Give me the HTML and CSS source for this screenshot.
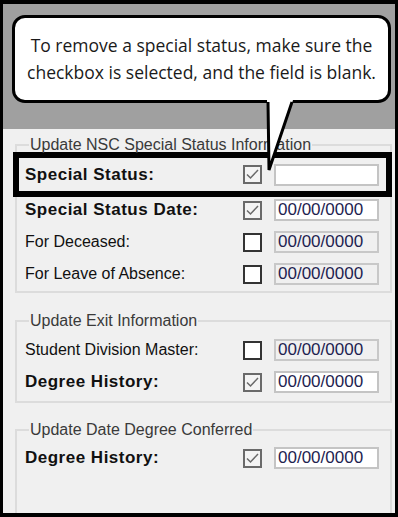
FILE: index.html
```html
<!DOCTYPE html>
<html lang="en">
  <head>
    <meta charset="UTF-8" />
    <meta name="viewport" content="width=device-width, initial-scale=1.0" />
    <title>Update Special Status</title>
    <link rel="stylesheet" href="styles.css">
  </head>
  <body>
    <div class="frame">
      <div class="header">
        <div class="bubble">
          <p class="bubble-text">To remove a special status, make sure the<br />checkbox is selected, and the field is blank.</p>
        </div>
      </div>
      <svg class="bubble-tail" width="36" height="78" viewBox="0 0 36 78">
        <polygon points="5,3 31,3 7,73" fill="#fff" />
        <polyline points="6,5 7,73 30,5" fill="none" stroke="#000" stroke-width="3" stroke-linejoin="miter" />
      </svg>

      <div class="panel">
        <fieldset class="group group-first">
          <legend>Update NSC Special Status Information</legend>
          <div class="row row-highlight">
            <span class="label label-bold">Special Status:</span>
            <span class="box box-checked">
              <svg width="15" height="15" viewBox="0 0 15 15"><polyline points="2,7.5 5.5,11 13,3" fill="none" stroke="#6a6a6a" stroke-width="1.5" /></svg>
            </span>
            <input type="text" class="field" value="" />
          </div>
          <div class="row row-tight">
            <span class="label label-bold">Special Status Date:</span>
            <span class="box box-checked">
              <svg width="15" height="15" viewBox="0 0 15 15"><polyline points="2,7.5 5.5,11 13,3" fill="none" stroke="#6a6a6a" stroke-width="1.5" /></svg>
            </span>
            <input type="text" class="field" value="00/00/0000" />
          </div>
          <div class="row">
            <span class="label">For Deceased:</span>
            <span class="box"></span>
            <input type="text" class="field" value="00/00/0000" disabled />
          </div>
          <div class="row">
            <span class="label">For Leave of Absence:</span>
            <span class="box"></span>
            <input type="text" class="field" value="00/00/0000" disabled />
          </div>
        </fieldset>

        <fieldset class="group group-exit">
          <legend>Update Exit Information</legend>
          <div class="row">
            <span class="label">Student Division Master:</span>
            <span class="box"></span>
            <input type="text" class="field" value="00/00/0000" disabled />
          </div>
          <div class="row">
            <span class="label label-bold">Degree History:</span>
            <span class="box box-checked">
              <svg width="15" height="15" viewBox="0 0 15 15"><polyline points="2,7.5 5.5,11 13,3" fill="none" stroke="#6a6a6a" stroke-width="1.5" /></svg>
            </span>
            <input type="text" class="field" value="00/00/0000" />
          </div>
        </fieldset>

        <fieldset class="group group-conferred">
          <legend>Update Date Degree Conferred</legend>
          <div class="row">
            <span class="label label-bold">Degree History:</span>
            <span class="box box-checked">
              <svg width="15" height="15" viewBox="0 0 15 15"><polyline points="2,7.5 5.5,11 13,3" fill="none" stroke="#6a6a6a" stroke-width="1.5" /></svg>
            </span>
            <input type="text" class="field" value="00/00/0000" />
          </div>
        </fieldset>
      </div>
    </div>
  </body>
</html>
```

FILE: styles.css
```css
body {
  margin: 0;
  background: #000;
  font-family: "Liberation Sans", Arial, sans-serif;
}
.frame {
  position: relative;
  box-sizing: border-box;
  width: 398px;
  height: 517px;
  border-style: solid;
  border-color: #000;
  border-width: 4px 3px 4px 3px;
  overflow: hidden;
  background: #f0f0f0;
}
.header {
  background: #a0a0a0;
  height: 125px;
  box-sizing: border-box;
  padding: 11px 4px 0 9px;
}
.bubble {
  background: #fff;
  border: 3px solid #000;
  border-radius: 13px;
  padding: 14px 0;
}
.bubble-text {
  margin: 0;
  text-align: center;
  font-family: "Open Sans", "Noto Sans", sans-serif;
  font-size: 17.5px;
  line-height: 27px;
  color: #1a1a1a;
  white-space: nowrap;
}
/* the tail sits over the bubble edge and the panel */
.bubble-tail {
  position: absolute;
  left: 259px;
  top: 93px;
}
.panel {
  padding: 7px 3px 0 12px;
}
.group {
  margin: 0;
  padding: 0;
  border: 2px solid #dcdcdc;
}
.group legend {
  margin-left: 12px;
  padding: 0 1px;
  font-size: 16px;
  line-height: 18px;
  color: #3a3a3a;
}
.group-first {
  padding-bottom: 1px;
}
.group-exit {
  margin-top: 19px;
  padding: 4px 0 3px;
}
.group-conferred {
  margin-top: 18px;
  padding-top: 3px;
  min-height: 200px;
}
.row {
  display: flex;
  align-items: center;
  height: 32px;
  padding-left: 8px;
}
.row-highlight {
  height: 33px;
  margin: -2px -2px 0 -4px;
  padding-left: 6px;
  border: 6px solid #000;
}
.row-tight {
  margin-top: -3px;
}
.label {
  width: 218px;
  flex-shrink: 0;
  font-size: 16px;
  color: #111;
  white-space: nowrap;
}
.label-bold {
  font-weight: 700;
  font-size: 17px;
  letter-spacing: 0.5px;
}
.box {
  box-sizing: border-box;
  width: 19px;
  height: 19px;
  margin-right: 12px;
  border: 2px solid #333;
  background: #fff;
  display: flex;
  align-items: center;
  justify-content: center;
}
.box-checked {
  border-color: #6a6a6a;
  background: #f4f4f4;
}
.field {
  box-sizing: border-box;
  width: 105px;
  height: 22px;
  margin: 0;
  padding: 0 0 0 2px;
  border: 2px solid #c4c4c4;
  background: #fff;
  font-family: "Liberation Sans", Arial, sans-serif;
  font-size: 17px;
  color: #1e2350;
  outline: none;
}
.field:disabled {
  background: #f0f0f0;
  border-color: #c8c8c8;
  color: #1e2350;
}
```
